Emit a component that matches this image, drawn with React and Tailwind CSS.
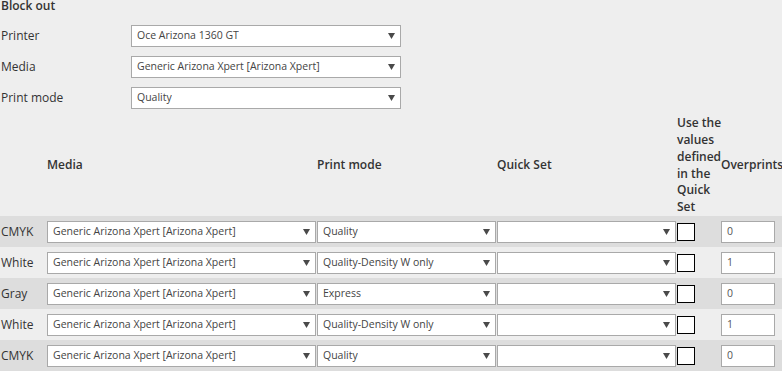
import React from "react";

const FONT = { fontFamily: '"Open Sans", "Noto Sans", sans-serif' };

function Arrow() {
  return (
    <svg width="7" height="6" viewBox="0 0 7 6" className="shrink-0">
      <polygon points="0,0 7,0 3.5,6" fill="#4a4a4a" />
    </svg>
  );
}

function FakeSelect({ value, className = "" }) {
  return (
    <div
      className={`h-[22px] shrink-0 flex items-center justify-between bg-white border border-[#a9a9a9] pl-[5px] pr-[5px] text-[10.5px] text-[#444] ${className}`}
    >
      <span className="truncate">{value}</span>
      <Arrow />
    </div>
  );
}

const topFields = [
  ["Printer", "Oce Arizona 1360 GT"],
  ["Media", "Generic Arizona Xpert [Arizona Xpert]"],
  ["Print mode", "Quality"],
];

const rows = [
  { name: "CMYK", mode: "Quality", over: "0" },
  { name: "White", mode: "Quality-Density W only", over: "1" },
  { name: "Gray", mode: "Express", over: "0" },
  { name: "White", mode: "Quality-Density W only", over: "1" },
  { name: "CMYK", mode: "Quality", over: "0" },
];

export default function App() {
  return (
    <div
      style={FONT}
      className="w-[782px] h-[371px] overflow-hidden bg-[#eeeeee] text-[12px] text-[#333]"
    >
      <div className="h-[20px] leading-[12px] font-semibold pl-[1px]">Block out</div>

      {topFields.map(([label, value]) => (
        <div key={label} className="h-[31px] flex items-center">
          <div className="w-[131px] shrink-0 pl-[1px]">{label}</div>
          <FakeSelect value={value} className="w-[270px]" />
        </div>
      ))}

      <div className="mt-[2px] h-[101px] flex items-center font-semibold leading-[16.8px]">
        <div className="w-[47px] shrink-0" />
        <div className="w-[270px] shrink-0">Media</div>
        <div className="w-[180px] shrink-0">Print mode</div>
        <div className="w-[180px] shrink-0">Quick Set</div>
        <div className="w-[44px] shrink-0 whitespace-nowrap">
          Use the
          <br />
          values
          <br />
          defined
          <br />
          in the
          <br />
          Quick
          <br />
          Set
        </div>
        <div className="shrink-0 whitespace-nowrap">Overprints</div>
      </div>

      {rows.map((r, i) => (
        <div
          key={i}
          className={`h-[31px] flex items-center ${i % 2 === 0 ? "bg-[#dddddd]" : "bg-[#eeeeee]"}`}
        >
          <div className="w-[47px] shrink-0 pl-[1px]">{r.name}</div>
          <div className="w-[270px] shrink-0">
            <FakeSelect value="Generic Arizona Xpert [Arizona Xpert]" className="w-[269px]" />
          </div>
          <div className="w-[180px] shrink-0">
            <FakeSelect value={r.mode} className="w-[179px]" />
          </div>
          <div className="w-[180px] shrink-0">
            <FakeSelect value="" className="w-[179px]" />
          </div>
          <div className="w-[44px] shrink-0 flex items-center">
            <div className="w-[18px] h-[18px] bg-white border border-black mt-[1px]" />
          </div>
          <div className="w-[54px] h-[22px] shrink-0 bg-white border border-[#a9a9a9] pl-[5px] flex items-center text-[10.5px] text-[#555]">
            {r.over}
          </div>
        </div>
      ))}
    </div>
  );
}
